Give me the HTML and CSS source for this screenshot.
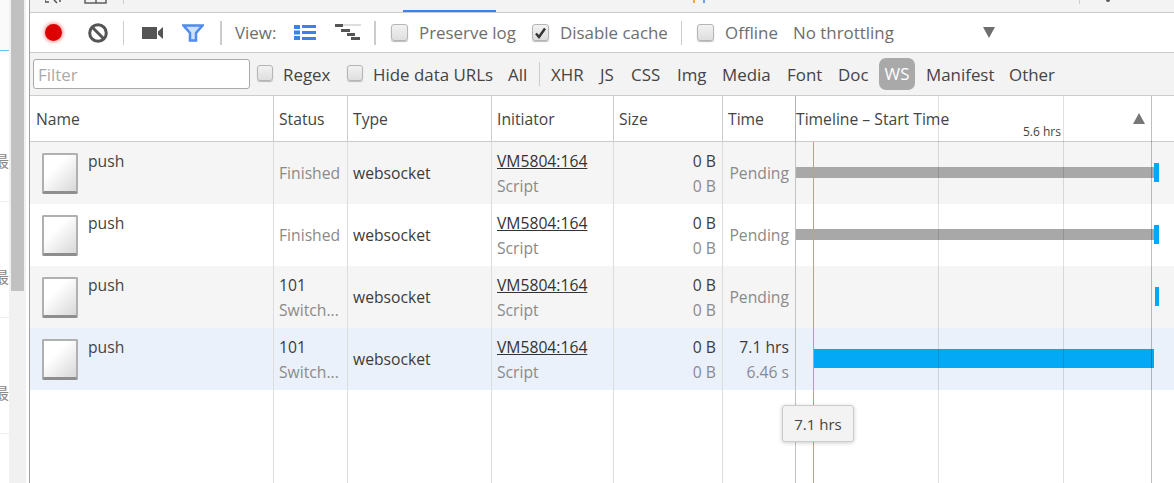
FILE: index.html
```html
<!DOCTYPE html>
<html lang="en">
<head>
<meta charset="utf-8">
<title>Network</title>
<link rel="stylesheet" href="styles.css">
</head>
<body>
<div class="app">
  <aside class="gutter">
    <div class="page-strip">
      <div class="page-top"></div>
      <div class="page-item first"><span class="cut">最</span></div>
      <div class="page-item"><span class="cut">最</span></div>
      <div class="page-item"><span class="cut">最</span></div>
    </div>
    <div class="scrollbar"><div class="thumb"></div></div>
  </aside>
  <main class="panel">
    <div class="tabs">
      <svg class="tab-icons" width="70" height="12" viewBox="0 0 70 12"><path d="M0 0v2h4M9 0l3 3M15 0v2" fill="none" stroke="#555" stroke-width="1.5"/><rect x="40" y="-6" width="21" height="9" fill="none" stroke="#555" stroke-width="1.4"/><path d="M51 0v3" stroke="#555" stroke-width="1.4"/></svg>
      <span class="tab-sep"></span>
      <span class="tab-active"></span>
      <span class="tab-flag"></span>
      <span class="tab-sep right"></span>
      <span class="tab-dot"></span>
    </div>
    <div class="toolbar">
      <span class="record"></span>
      <svg class="i-clear" width="20" height="20" viewBox="0 0 20 20"><circle cx="10" cy="10" r="8.3" fill="none" stroke="#555" stroke-width="3"/><path d="M4.5 4.5l11 11" stroke="#555" stroke-width="3"/></svg>
      <span class="sep s-1"></span>
      <svg class="i-cam" width="21" height="12" viewBox="0 0 21 12"><path d="M0 0h15v12H0zM16 4.5L21 0v12l-5-4.500z" fill="#555"/></svg>
      <svg class="i-filter" width="22" height="18" viewBox="0 0 22 18"><path d="M1.500 1.500h19L14 9v7.500H8V9z" fill="#cfe0fb" stroke="#4f8bf0" stroke-width="2.500"/></svg>
      <span class="sep wide s-2"></span>
      <span class="lbl view">View:</span>
      <svg class="i-list" width="22" height="15" viewBox="0 0 22 15"><path d="M0 0h6v4H0zM0 5.500h6v4H0zM0 11h6v4H0zM8 0h14v3H8zM8 6h14v3H8zM8 12h14v3H8z" fill="#3f7fe8"/></svg>
      <svg class="i-fall" width="26" height="17" viewBox="0 0 26 17"><path d="M0 0h8v3H0zM6 5h9v3H6zM12 9h8v3h-8zM16 13h9v3h-9z" fill="#555"/><path d="M8 0h18v2H8z" fill="#ddd"/></svg>
      <span class="sep wide s-3"></span>
      <span class="check c-pre"></span>
      <span class="lbl pre">Preserve log</span>
      <span class="check on c-dis"><svg width="13" height="12" viewBox="0 0 13 12"><path d="M2 6.500l3 3.500 6-8.500" fill="none" stroke="#333" stroke-width="2.400"/></svg></span>
      <span class="lbl dis">Disable cache</span>
      <span class="sep s-4"></span>
      <span class="check c-off"></span>
      <span class="lbl off">Offline</span>
      <span class="lbl thr">No throttling</span>
      <span class="drop"></span>
    </div>
    <div class="filterbar">
      <span class="filter-input">Filter</span>
      <span class="check small c-reg"></span><span class="txt t-reg">Regex</span>
      <span class="check small c-hide"></span><span class="txt t-hide">Hide data URLs</span>
      <span class="txt t-all">All</span>
      <span class="sep s-5"></span>
      <span class="txt t-xhr">XHR</span>
      <span class="txt t-js">JS</span>
      <span class="txt t-css">CSS</span>
      <span class="txt t-img">Img</span>
      <span class="txt t-media">Media</span>
      <span class="txt t-font">Font</span>
      <span class="txt t-doc">Doc</span>
      <span class="pill">WS</span>
      <span class="txt t-man">Manifest</span>
      <span class="txt t-oth">Other</span>
    </div>
    <div class="table">
      <div class="row head">
        <div class="cell">Name</div>
        <div class="cell">Status</div>
        <div class="cell">Type</div>
        <div class="cell">Initiator</div>
        <div class="cell">Size</div>
        <div class="cell">Time</div>
        <div class="cell tl">Timeline – Start Time<span class="sort"></span><span class="tick">5.6 hrs</span></div>
      </div>

      <div class="row grey">
        <div class="cell name"><span class="file"></span><span class="fname">push</span></div>
        <div class="cell dim">Finished</div>
        <div class="cell">websocket</div>
        <div class="cell two"><a class="link">VM5804:164</a><span class="dim">Script</span></div>
        <div class="cell two r"><span>0 B</span><span class="dim">0 B</span></div>
        <div class="cell r dim">Pending</div>
        <div class="cell tl"><span class="bar wait"></span><span class="bar mark"></span></div>
      </div>
      <div class="row">
        <div class="cell name"><span class="file"></span><span class="fname">push</span></div>
        <div class="cell dim">Finished</div>
        <div class="cell">websocket</div>
        <div class="cell two"><a class="link">VM5804:164</a><span class="dim">Script</span></div>
        <div class="cell two r"><span>0 B</span><span class="dim">0 B</span></div>
        <div class="cell r dim">Pending</div>
        <div class="cell tl"><span class="bar wait"></span><span class="bar mark"></span></div>
      </div>
      <div class="row grey">
        <div class="cell name"><span class="file"></span><span class="fname">push</span></div>
        <div class="cell two"><span>101</span><span class="dim">Switch...</span></div>
        <div class="cell">websocket</div>
        <div class="cell two"><a class="link">VM5804:164</a><span class="dim">Script</span></div>
        <div class="cell two r"><span>0 B</span><span class="dim">0 B</span></div>
        <div class="cell r dim">Pending</div>
        <div class="cell tl"><span class="bar mark thin"></span></div>
      </div>
      <div class="row sel">
        <div class="cell name"><span class="file"></span><span class="fname">push</span></div>
        <div class="cell two"><span>101</span><span class="dim">Switch...</span></div>
        <div class="cell">websocket</div>
        <div class="cell two"><a class="link">VM5804:164</a><span class="dim">Script</span></div>
        <div class="cell two r"><span>0 B</span><span class="dim">0 B</span></div>
        <div class="cell two r"><span>7.1 hrs</span><span class="dim">6.46 s</span></div>
        <div class="cell tl"><span class="bar recv"></span></div>
      </div>
      <div class="row filler">
        <div class="cell"></div><div class="cell"></div><div class="cell"></div><div class="cell"></div><div class="cell"></div><div class="cell"></div><div class="cell tl"></div>
      </div>

      <span class="vline v1"></span>
      <span class="vline v2"></span>
      <span class="vline v3"></span>
      <span class="vline v4"></span>
      <span class="vline red"></span>
      <div class="tooltip">7.1 hrs</div>
    </div>
  </main>
</div>
</body>
</html>
```
FILE: styles.css
```css
* { box-sizing: border-box; }
html, body { margin: 0; height: 100%; overflow: hidden; background: #fff; }
body { font: 15.7px/20px "Open Sans", "Noto Sans CJK SC", sans-serif; color: #3c3c3c; }
.app { display: flex; height: 483px; }

.gutter { width: 29px; flex: none; display: flex; background: #fff; }
.page-strip { width: 9px; flex: none; overflow: hidden; }
.page-top { height: 51px; background: #fafafa; border-bottom: 1px solid #5cc4f5; }
.page-item { height: 116px; border-bottom: 1px solid #eee; position: relative; overflow: hidden; color: #888; }
.page-item.first { height: 151px; }
.cut { position: absolute; right: 0; bottom: 30px; font-size: 16px; white-space: nowrap; }
.scrollbar { width: 17px; margin-left: 0; background: #f1f1f1; padding: 0 2px; }
.thumb { height: 291px; width: 13px; background: #c1c1c1; }

.panel { flex: 1; display: flex; flex-direction: column; border-left: 1px solid #a3a3a3; min-width: 0; }

.tabs { height: 13px; flex: none; background: #f3f3f3; border-bottom: 1px solid #ccc; position: relative; }
.tab-icons { position: absolute; left: 15px; top: 0; }
.tab-sep { position: absolute; left: 93px; top: 0; width: 1px; height: 4px; background: #ccc; }
.tab-sep.right { left: 1049px; }
.tab-active { position: absolute; left: 373px; top: 10px; width: 93px; height: 2px; background: #3d80f0; }
.tab-flag { position: absolute; left: 663px; top: 0; width: 12px; height: 3px; border-left: 2px solid #e8a54c; border-right: 2px solid #6a9fe8; }
.tab-dot { position: absolute; left: 1076px; top: 0; width: 4px; height: 2px; background: #555; border-radius: 0 0 2px 2px; }

.toolbar { height: 40px; flex: none; display: flex; align-items: center; background: #fff; border-bottom: 1px solid #ccc; padding-left: 15px; color: #6e6e6e; font-size: 16.9px; }
.record { width: 17px; height: 17px; border-radius: 50%; background: #dd0000; box-shadow: 0 0 3px 2px #f4b8b8; margin-right: 26px; }
.sep { width: 1px; height: 24px; background: #ccc; flex: none; }
.sep.wide { width: 2px; }
.i-clear, .i-cam, .i-filter, .i-list, .i-fall { flex: none; }
.s-1 { margin-left: 15px; margin-right: 18px; }
.i-cam { margin-right: 19px; }
.s-2 { margin-left: 16px; margin-right: 13px; }
.view { width: 59px; }
.i-list { margin-right: 19px; }
.s-3 { margin-left: 13px; margin-right: 15px; }
.check { width: 17px; height: 17px; flex: none; border: 1px solid #b5b5b5; border-radius: 3px; background: linear-gradient(#f2f2f2, #dedede); box-shadow: 0 1px 1px #bbb; display: flex; align-items: center; justify-content: center; }
.check.small { width: 16px; height: 16px; }
.c-pre { margin-right: 11px; }
.pre { width: 113px; }
.c-dis { margin-right: 11px; }
.dis { width: 121px; }
.s-4 { margin-right: 15px; }
.c-off { margin-right: 11px; }
.off { width: 68px; }
.thr { width: 190px; }
.drop { width: 0; height: 0; border-left: 6px solid transparent; border-right: 6px solid transparent; border-top: 11px solid #6e6e6e; }
.lbl { flex: none; white-space: nowrap; }

.filterbar { height: 43px; flex: none; display: flex; align-items: center; background: #f3f3f3; border-bottom: 1px solid #ccc; padding-left: 3px; padding-top: 1px; font-size: 16.9px; color: #444; }
.filter-input { width: 217px; height: 30px; flex: none; background: #fff; border: 1px solid #aaa; border-radius: 3px; padding: 5px 4px; color: #aaa; margin-top: -1px; }
.txt { flex: none; white-space: nowrap; }
.c-reg { margin-left: 7px; margin-right: 10px; margin-top: -3px; }
.t-reg { width: 64px; }
.c-hide { margin-right: 10px; margin-top: -3px; }
.t-hide { width: 135px; }
.t-all { width: 31px; }
.s-5 { margin-right: 11px; margin-top: -1px; }
.t-xhr { width: 49px; }
.t-js { width: 31px; }
.t-css { width: 46px; }
.t-img { width: 45px; }
.t-media { width: 65px; }
.t-font { width: 51px; }
.t-doc { width: 41px; }
.pill { width: 36px; height: 32px; flex: none; border-radius: 7px; background: #a9a9a9; color: #fff; text-align: center; line-height: 32px; margin-right: 11px; margin-top: -1px; }
.t-man { width: 83px; }

.table { flex: 1; display: flex; flex-direction: column; position: relative; min-height: 0; }
.row { display: grid; grid-template-columns: 244px 74px 144px 122px 109px 73px 1fr; height: 62px; flex: none; align-items: stretch; }
.row.grey { background: #f5f5f5; }
.row.sel { background: #eaf1fb; }
.row.head { height: 46px; border-bottom: 1px solid #ccc; color: #444; }
.row.filler { flex: 1; }
.cell { border-right: 1px solid #ddd; padding: 0 6px 0 5px; display: flex; align-items: center; white-space: nowrap; position: relative; min-width: 0; }
.head .cell { border-right-color: #ccc; }
.head .cell:first-child { padding-left: 6px; }
.cell.r { justify-content: flex-end; text-align: right; }
.cell.tl { border-right: 0; padding: 0; }
.cell.two { flex-direction: column; align-items: flex-start; justify-content: center; gap: 5px; }
.cell.two.r { align-items: flex-end; justify-content: center; }
.dim { color: #8a8a8a; }
.link { color: #333; text-decoration: underline; }
.name { align-items: flex-start; padding: 0 0 0 12px; }
.file { width: 36px; height: 41px; margin-top: 11px; flex: none; border: 2px solid #b0b0b0; border-bottom: 3px solid #8e8e8e; border-radius: 2px; background: linear-gradient(135deg, #fff 35%, #d8d8d8); }
.fname { margin: 9px 0 0 10px; color: #444; }

.sort { position: absolute; left: 337px; top: 17px; width: 0; height: 0; border-left: 6.500px solid transparent; border-right: 6.500px solid transparent; border-bottom: 11px solid #777; }
.tick { position: absolute; left: 227px; top: 28px; font-size: 12px; line-height: 16px; color: #444; }

.bar { position: absolute; }
.wait { left: 0; top: 25px; width: 358px; height: 11px; background: #a8a8a8; }
.mark { left: 358px; top: 21px; width: 5px; height: 19px; background: #00a9f7; }
.mark.thin { left: 359px; width: 4px; }
.recv { left: 18px; top: 21px; width: 340px; height: 19px; background: #03a9f4; }

.vline { position: absolute; top: 0; bottom: 0; width: 1px; background: rgba(0, 0, 0, .12); pointer-events: none; }
.v1 { left: 765px; }
.v2 { left: 908px; }
.v3 { left: 1033px; }
.v4 { left: 1121px; background: rgba(0, 0, 0, .25); }
.red { left: 783px; top: 46px; background: #e88; }
.tooltip { position: absolute; left: 752px; top: 309px; width: 72px; height: 37px; background: #f3f3f3; border: 1px solid #ccc; border-radius: 3px; box-shadow: 0 1px 4px rgba(0, 0, 0, .2); display: flex; align-items: center; justify-content: center; color: #444; font-size: 15px; }
```
